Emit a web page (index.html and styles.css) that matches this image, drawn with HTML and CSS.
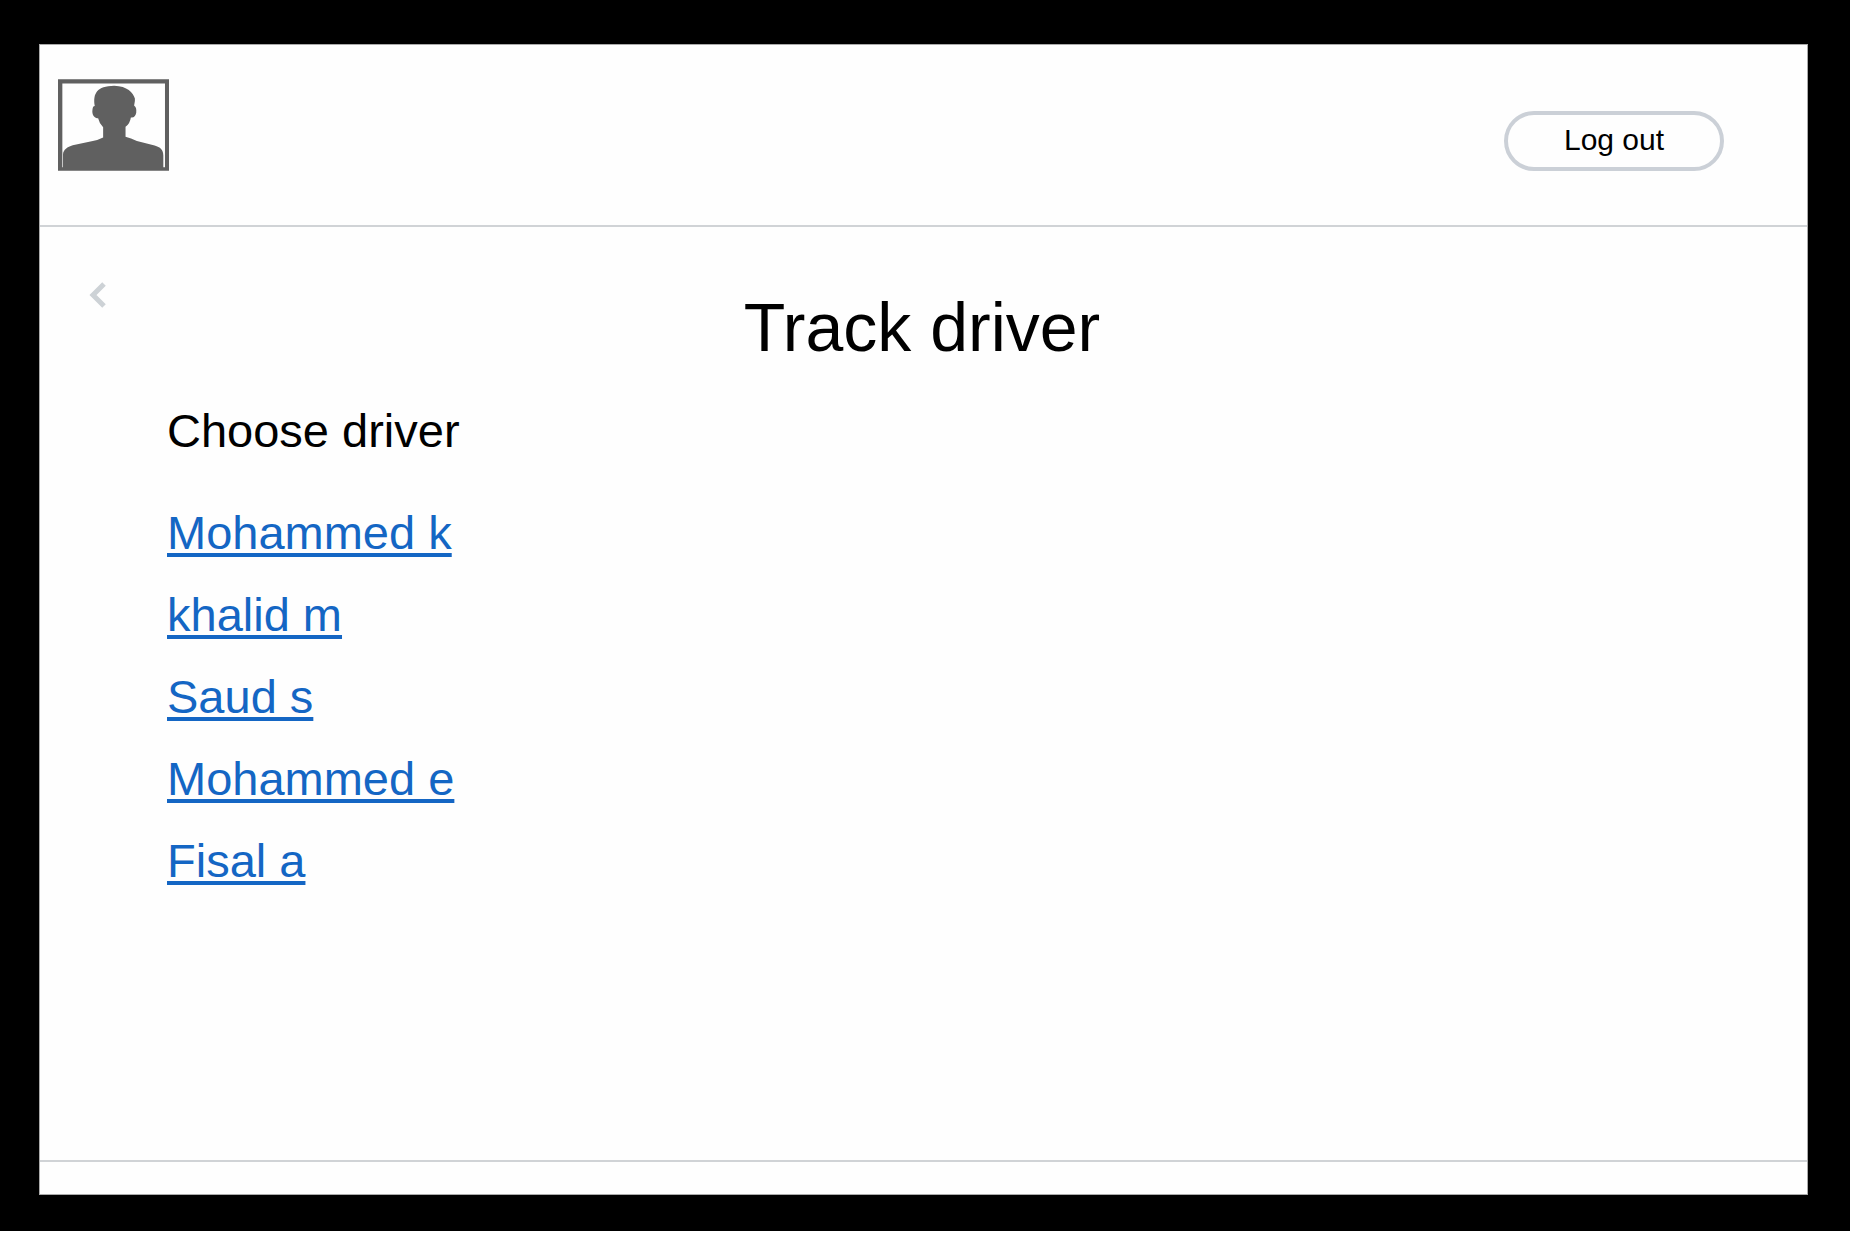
FILE: index.html
```html
<!DOCTYPE html>
<html lang="en">
<head>
<meta charset="utf-8">
<meta name="viewport" content="width=device-width, initial-scale=1">
<title>Track driver</title>
<link rel="stylesheet" href="styles.css">
</head>
<body>
<div class="bezel">
  <div class="screen">
    <header class="header">
      <svg class="avatar" viewBox="116 148 332 273" role="img" aria-label="Profile">
        <path class="avatar-frame" fill-rule="evenodd" d="M116 148H448V421H116ZM129 160V411H436V160Z"/>
        <path class="avatar-person" d="M131 416V372C132 358 144 350 160 345L220 332Q238 329 251 322V291Q240 281 236 264C224 266 217 252 219 240C220 230 222 228 226 228C220 190 232 168 284 167C324 168 340 188 346 205C347 216 343 222 344 228C350 230 351 240 350 248C348 258 342 264 334 262Q331 281 318 290V320Q334 325 352 332L405 346C422 351 431 358 431 376V416Z"/>
      </svg>
      <button class="logout" type="button">Log out</button>
    </header>
    <main class="main">
      <a class="back" href="#" aria-label="Back">
        <svg class="chevron" viewBox="0 0 18 26" aria-hidden="true"><path d="M15 2L4 13L15 24"/></svg>
      </a>
      <h1 class="title">Track driver</h1>
      <section class="drivers">
        <h2 class="subtitle">Choose driver</h2>
        <ul class="driver-list">
          <li><a href="#">Mohammed k</a></li>
          <li><a href="#">khalid m</a></li>
          <li><a href="#">Saud s</a></li>
          <li><a href="#">Mohammed e</a></li>
          <li><a href="#">Fisal a</a></li>
        </ul>
      </section>
    </main>
    <footer class="footer"></footer>
  </div>
</div>
</body>
</html>
```
FILE: styles.css
```css
* {
  box-sizing: border-box;
}

body {
  margin: 0;
  background: #fff;
  color: #000;
  font-family: "Liberation Sans", Arial, sans-serif;
}

.bezel {
  display: flex;
  min-height: calc(100vh - 6px);
  margin: 0 8px 6px 0;
  padding: 44px 42px 36px 39px;
  background: #000;
}

.screen {
  display: flex;
  flex: 1;
  flex-direction: column;
  border: 1px solid #aaa;
  background: #fefefe;
}

.header {
  display: flex;
  align-items: flex-end;
  justify-content: space-between;
  padding: 34px 83px 54px 18px;
  border-bottom: 2px solid #d0d3d6;
}

.avatar {
  width: 111px;
  height: 92px;
  fill: #606060;
}

.logout {
  width: 220px;
  height: 60px;
  padding: 0 0 2px;
  border: 4px solid #cbd0d7;
  border-radius: 30px;
  background: transparent;
  color: #000;
  font: 30px "Liberation Sans", Arial, sans-serif;
}

.main {
  display: grid;
  flex: 1;
  grid-template-columns: 127px 1fr 130px;
  grid-template-rows: auto 1fr;
  row-gap: 34px;
  padding-top: 60px;
}

.back {
  justify-self: center;
  align-self: start;
  margin-top: -5px;
  padding-right: 12px;
}

.chevron {
  display: block;
  width: 18px;
  height: 26px;
  fill: none;
  stroke: #cdd2d6;
  stroke-width: 5;
}

.title {
  margin: 0;
  font-size: 68px;
  font-weight: 400;
  line-height: 80px;
  text-align: center;
}

.drivers {
  grid-column: 2;
  font-size: 47px;
  line-height: 60px;
}

.subtitle {
  margin: 0 0 42px;
  font-size: inherit;
  font-weight: 400;
}

.driver-list {
  display: flex;
  flex-direction: column;
  gap: 22px;
  margin: 0;
  padding: 0;
  list-style: none;
}

.driver-list a {
  color: #1466c4;
  text-decoration-thickness: 4px;
  text-decoration-skip-ink: none;
  text-underline-offset: 4px;
}

.footer {
  height: 34px;
  border-top: 2px solid #d0d3d6;
}
```
